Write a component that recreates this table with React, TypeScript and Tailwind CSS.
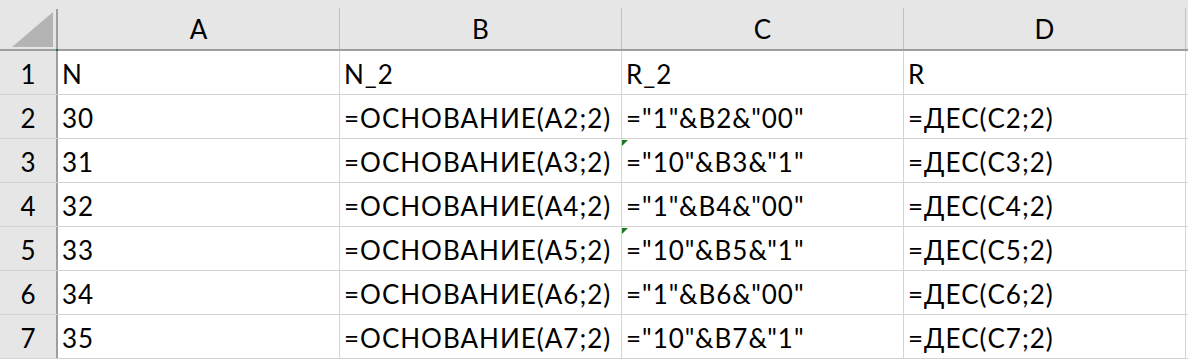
import React from "react";

const cols = ["A", "B", "C", "D"];
const rows: string[][] = [
  ["N", "N_2", "R_2", "R"],
  ["30", "=ОСНОВАНИЕ(A2;2)", '="1"&B2&"00"', "=ДЕС(C2;2)"],
  ["31", "=ОСНОВАНИЕ(A3;2)", '="10"&B3&"1"', "=ДЕС(C3;2)"],
  ["32", "=ОСНОВАНИЕ(A4;2)", '="1"&B4&"00"', "=ДЕС(C4;2)"],
  ["33", "=ОСНОВАНИЕ(A5;2)", '="10"&B5&"1"', "=ДЕС(C5;2)"],
  ["34", "=ОСНОВАНИЕ(A6;2)", '="1"&B6&"00"', "=ДЕС(C6;2)"],
  ["35", "=ОСНОВАНИЕ(A7;2)", '="10"&B7&"1"', "=ДЕС(C7;2)"],
];

const font = { fontFamily: "Lato, 'Noto Sans', 'Liberation Sans', sans-serif" };

export default function App() {
  return (
    <div
      className="w-[1188px] h-[360px] bg-white overflow-hidden text-[26px] text-black"
      style={font}
    >
      {/* header row */}
      <div className="flex h-[51px] bg-[#e6e6e6] border-b-2 border-[#9e9e9e]">
        <div className="relative w-[58px] shrink-0 flex flex-col">
          <div className="h-[9px]" />
          <div className="flex-1 border-r-2 border-[#9e9e9e] flex items-end justify-end pr-[3px] pb-[2px]">
            <svg width="41" height="35" viewBox="0 0 41 35">
              <polygon points="41,0 41,35 0,35" fill="#b4b4b4" />
            </svg>
          </div>
          <div className="absolute right-[0px] bottom-[-2px] w-[2px] h-[2px] bg-[#217346]" />
        </div>
        {cols.map((c) => (
          <div key={c} className="w-[282px] shrink-0 flex flex-col">
            <div className="h-[9px]" />
            <div className="flex-1 border-r border-[#c0c0c0] flex items-center justify-center pt-[2px]">
              {c}
            </div>
          </div>
        ))}
      </div>
      {/* body rows */}
      {rows.map((r, i) => (
        <div key={i} className="flex h-[44px] border-b border-[#d4d4d4]">
          <div className="w-[58px] shrink-0 bg-[#e6e6e6] border-r-2 border-[#9e9e9e] flex items-end justify-center pb-[2px] leading-[36px]">
            {i + 1}
          </div>
          {r.map((v, j) => (
            <div
              key={j}
              className="relative w-[282px] shrink-0 border-r border-[#d4d4d4] flex items-end pl-[4px] pb-[2px] leading-[36px] whitespace-nowrap tracking-[1px]"
            >
              {j === 2 && (i === 2 || i === 4) && (
                <svg
                  className="absolute left-0 top-[1px]"
                  width="6"
                  height="6"
                  viewBox="0 0 6 6"
                >
                  <polygon points="0,0 6,0 0,6" fill="#1f7a1f" />
                </svg>
              )}
              {v}
            </div>
          ))}
        </div>
      ))}
    </div>
  );
}
